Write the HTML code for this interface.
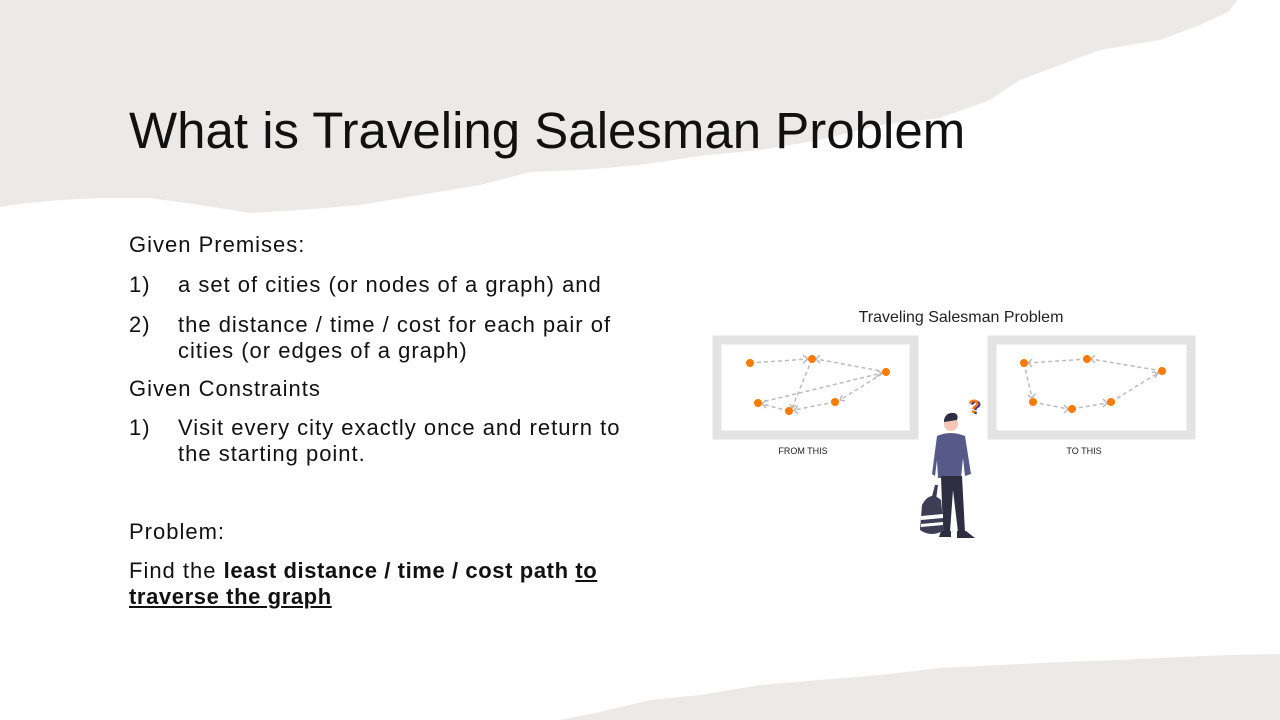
<!DOCTYPE html>
<html><head><meta charset="utf-8"><style>
html,body{margin:0;padding:0;width:1280px;height:720px;overflow:hidden;background:#fff;font-family:"Liberation Sans",sans-serif;}
.t{position:absolute;white-space:nowrap;color:#111;font-size:22px;line-height:26px;letter-spacing:1px}
</style></head><body>
<svg width="1280" height="720" style="position:absolute;left:0;top:0">
<path d="M0,0 L1238,0 L1228,12 L1200,25 L1160,40 L1100,50 L1060,65 L1020,80 L990,100 L940,118 L880,125 L820,140 L760,150 L700,156 L640,165 L580,170 L530,172 L480,185 L420,195 L360,205 L300,210 L250,213 L200,205 L150,198 L100,198 L60,200 L20,204 L0,207 Z" fill="#ebeae8"/>
<path d="M560,720 L600,712 L650,700 L700,695 L760,685 L820,680 L880,675 L940,668 L1000,665 L1060,662 L1120,660 L1180,657 L1230,655 L1280,654 L1280,720 Z" fill="#ebeae8"/>
</svg>
<div class="t" style="left:129px;top:99px;font-size:51px;line-height:64px;color:#111;letter-spacing:0px">What is Traveling Salesman Problem</div>
<div class="t" style="left:129px;top:232px">Given Premises:</div>
<div class="t" style="left:129px;top:272px">1)</div><div class="t" style="left:178px;top:272px">a set of cities (or nodes of a graph) and</div>
<div class="t" style="left:129px;top:312px">2)</div><div class="t" style="left:178px;top:312px">the distance / time / cost for each pair of</div>
<div class="t" style="left:178px;top:338px">cities (or edges of a graph)</div>
<div class="t" style="left:129px;top:376px">Given Constraints</div>
<div class="t" style="left:129px;top:415px">1)</div><div class="t" style="left:178px;top:415px">Visit every city exactly once and return to</div>
<div class="t" style="left:178px;top:441px">the starting point.</div>
<div class="t" style="left:129px;top:519px">Problem:</div>
<div class="t" style="left:129px;top:558px">Find the <b style="letter-spacing:0.6px">least distance / time / cost path <u>to</u></b></div>
<div class="t" style="left:129px;top:584px"><b style="letter-spacing:0.6px"><u>traverse the graph</u></b></div>
<svg width="1280" height="720" style="position:absolute;left:0;top:0">
<text x="961" y="322" text-anchor="middle" font-family="Liberation Sans" font-size="16" fill="#222">Traveling Salesman Problem</text>
<rect x="717" y="340" width="197" height="95" fill="#fff" stroke="#e3e3e3" stroke-width="9"/>
<rect x="992" y="340" width="199" height="95" fill="#fff" stroke="#e3e3e3" stroke-width="9"/>
<text x="803" y="454" text-anchor="middle" font-family="Liberation Sans" font-size="9" fill="#222">FROM THIS</text>
<text x="1084" y="454" text-anchor="middle" font-family="Liberation Sans" font-size="9" fill="#222">TO THIS</text>
<g stroke="#bbb" stroke-width="1.5" stroke-dasharray="4,3" fill="none">
<path d="M750,363 L808,359 M886,372 L816,359 M812,359 L792,408 M758,403 L882,373 M882,374 L840,400 M835,402 L794,410 M789,411 L762,404"/>
<path d="M1087,359 L1028,363 M1162,371 L1091,359 M1024,363 L1032,398 M1033,402 L1068,409 M1072,409 L1107,403 M1111,402 L1158,373"/>
</g>
<g stroke="#bbb" stroke-width="1.5" fill="none">
<path d="M803,355 L808,359 L803,363 M820,355 L816,359 L820,363 M790,404 L792,408 L796,405 M876,370 L882,373 L876,377 M842,395 L840,400 L845,401 M798,406 L794,410 L798,414 M766,400 L762,404 L766,408"/>
<path d="M1032,359 L1028,363 L1032,367 M1095,355 L1091,359 L1095,363 M1028,395 L1032,398 L1035,394 M1064,405 L1068,409 L1064,413 M1103,399 L1107,403 L1103,407 M1152,372 L1158,373 L1155,378"/>
</g>
<g fill="#ff7a00">
<circle cx="750" cy="363" r="4"/><circle cx="812" cy="359" r="4"/><circle cx="886" cy="372" r="4"/><circle cx="758" cy="403" r="4"/><circle cx="789" cy="411" r="4"/><circle cx="835" cy="402" r="4"/>
<circle cx="1024" cy="363" r="4"/><circle cx="1087" cy="359" r="4"/><circle cx="1162" cy="371" r="4"/><circle cx="1033" cy="402" r="4"/><circle cx="1072" cy="409" r="4"/><circle cx="1111" cy="402" r="4"/>
</g>
<text x="970" y="414" font-family="Liberation Sans" font-weight="bold" font-size="19" fill="#3f3d9e">?</text>
<text x="968" y="413" font-family="Liberation Sans" font-weight="bold" font-size="19" fill="#ff7a00">?</text>
<circle cx="951" cy="424" r="7" fill="#f5c6b5"/>
<path d="M944,420 Q946,412 954,413 Q959,414 957,420 L944,422 Z" fill="#2f2e41"/>
<path d="M937,436 Q950,430 965,436 L971,474 L965,476 L963,458 L961,478 L938,478 L937,460 L935,476 L932,474 Z" fill="#575a89"/>
<path d="M941,476 L962,476 L965,532 L958,532 L953,490 L950,532 L943,532 Z" fill="#2f2e41"/>
<path d="M941,531 L951,531 L951,537 L939,537 Z M957,531 L966,531 L975,538 L957,538 Z" fill="#2f2e41"/>
<path d="M922,505 Q930,490 941,500 L944,530 Q932,538 920,530 Z" fill="#3f3d56"/>
<path d="M921,516 L943,514 L943,518 L921,520 Z M921,524 L943,522 L943,525 L921,527 Z" fill="#fff"/>
<path d="M931,500 L935,485 L938,485 L936,500 Z" fill="#3f3d56"/>
</svg>
</body></html>
